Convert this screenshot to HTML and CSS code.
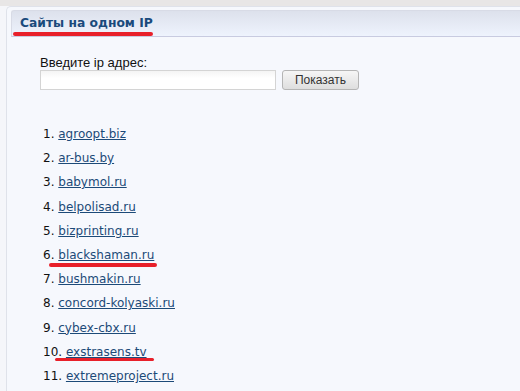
FILE: index.html
```html
<!DOCTYPE html>
<html lang="ru">
<head>
  <meta charset="UTF-8" />
  <title>Сайты на одном IP</title>
  <link rel="stylesheet" href="styles.css">
</head>
<body>
  <div class="topbar"></div>
  <div class="page">
    <div class="panel">
      <div class="panel-head">
        <h1>Сайты на одном IP</h1>
      </div>

      <div class="panel-body">
        <form class="ip-form">
          <label for="ip">Введите ip адрес:</label>
          <div class="ip-row">
            <input type="text" id="ip" name="ip" />
            <button type="button" class="btn">Показать</button>
          </div>
        </form>

        <ol class="sites">
          <li><a href="#">agroopt.biz</a></li>
          <li><a href="#">ar-bus.by</a></li>
          <li><a href="#">babymol.ru</a></li>
          <li><a href="#">belpolisad.ru</a></li>
          <li><a href="#">bizprinting.ru</a></li>
          <li><a href="#">blackshaman.ru</a></li>
          <li><a href="#">bushmakin.ru</a></li>
          <li><a href="#">concord-kolyaski.ru</a></li>
          <li><a href="#">cybex-cbx.ru</a></li>
          <li><a href="#">exstrasens.tv</a></li>
          <li><a href="#">extremeproject.ru</a></li>
        </ol>
      </div>
    </div>
  </div>

  <!-- red marker strokes drawn over the page -->
  <span class="mark mark-title"></span>
  <span class="mark mark-black"></span>
  <span class="mark mark-extra"></span>
</body>
</html>
```

FILE: styles.css
```css
:root {
  --link: #1c4a78;
  --text: #111111;
  --head-border: #c8cbe0;
  --panel-bg: #f6f8fd;
  --red: #e8202a;
}

body {
  margin: 0;
  font-family: "DejaVu Sans", Verdana, sans-serif;
  font-size: 12px;
  color: var(--text);
  background-color: #f5f6fa;
  overflow: hidden;
}

.topbar {
  height: 6px;
  background-color: #e8e6e6;
}

.page {
  padding-left: 6px;
}

.panel {
  background-color: var(--panel-bg);
  border-top: 1px solid #dfe2ea;
  border-left: 1px solid #dfe2ea;
  border-top-left-radius: 5px;
  padding: 3px 0 0 4px;
  height: 400px;
}

.panel-head {
  height: 25px;
  border-top: 1px solid #d8dbe6;
  border-left: 1px solid #d8dbe6;
  border-bottom: 1px solid var(--head-border);
  border-top-left-radius: 3px;
  background: linear-gradient(#dde1ec, #eef3fd);
  padding-left: 8px;
}

.panel-head h1 {
  margin: 0;
  font-size: 12.3px;
  line-height: 25px;
  font-weight: bold;
  color: #1a4a7c;
}

.panel-body {
  padding: 19px 0 0 29px;
}

.ip-form label {
  display: block;
  font-family: "Liberation Sans", Arial, sans-serif;
  font-size: 13px;
  line-height: 14px;
  color: #111;
}

.ip-row {
  display: flex;
  gap: 6px;
}

.ip-row input {
  width: 236px;
  height: 20px;
  box-sizing: border-box;
  border: 1px solid #d4d4d4;
  background: linear-gradient(#f4f4f4, #ffffff 40%);
  padding: 0 3px;
  margin: 0;
}

.btn {
  width: 77px;
  height: 20px;
  padding: 0;
  border: 1px solid #b5b5b5;
  border-radius: 3px;
  background: linear-gradient(#f6f6f6, #dedede);
  font-family: "Liberation Sans", Arial, sans-serif;
  font-size: 12px;
  color: #333;
}

.sites {
  list-style-position: inside;
  margin: 32px 0 0;
  padding: 0 0 0 3px;
}

.sites li {
  line-height: 24.2px;
}

.sites a {
  color: var(--link);
  text-decoration: underline;
}

.mark {
  position: absolute;
  height: 3.5px;
  border-radius: 2px;
  background-color: var(--red);
}

.mark-title {
  left: 13px;
  top: 32px;
  width: 140px;
}

.mark-black {
  left: 49px;
  top: 263px;
  width: 108px;
}

.mark-extra {
  left: 55px;
  top: 357.5px;
  width: 99px;
}
```
